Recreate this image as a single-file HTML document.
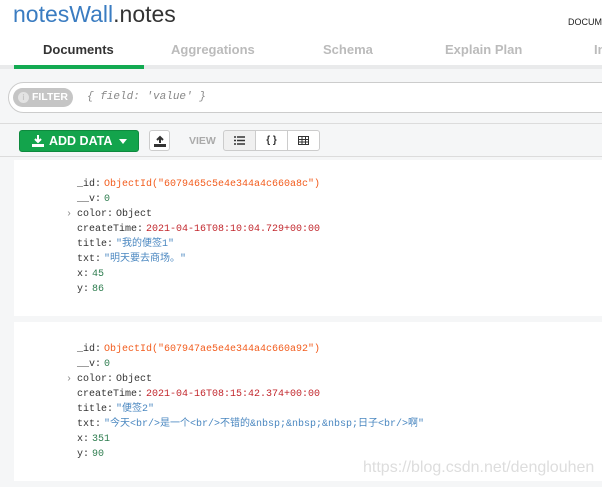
<!DOCTYPE html>
<html><head><meta charset="utf-8">
<style>
*{margin:0;padding:0;box-sizing:border-box}
body{width:602px;height:487px;overflow:hidden;background:#f5f6f7;font-family:"Liberation Sans",Arial,sans-serif;position:relative}
.hdr{position:absolute;left:0;top:0;width:602px;height:69px;background:#fff}
.title{position:absolute;left:13px;top:1px;font-size:23px;color:#333}
.title b{font-weight:normal;color:#3a7cc1}
.docum{position:absolute;left:568px;top:17px;font-size:9px;color:#222}
.tab{position:absolute;top:42px;font-size:13px;font-weight:bold;color:#bbb}
.bar{position:absolute;left:0;top:65px;width:602px;height:4px;background:#e9eaeb}
.green{position:absolute;left:14px;top:65px;width:130px;height:4px;background:#13aa52}
.filter{position:absolute;left:8px;top:82px;width:610px;height:31px;background:#fff;border:1px solid #ccc;border-radius:16px}
.pill{position:absolute;left:4px;top:5px;width:60px;height:19px;background:#c5c5c5;border-radius:10px;color:#fff;font-size:10.5px;font-weight:bold;line-height:19px;padding-left:19px;white-space:nowrap}
.pill i{position:absolute;left:5px;top:4px;width:11px;height:11px;border-radius:50%;background:#e3e3e3;color:#c5c5c5;font-style:normal;font-size:8px;line-height:11px;text-align:center}
.ph{position:absolute;left:78px;top:8px;font-family:"Liberation Mono",monospace;font-style:italic;font-size:11px;color:#888}
.hl{position:absolute;left:0;width:602px;height:1px;background:#dcdcdc}
.add{position:absolute;left:19px;top:130px;width:120px;height:22px;background:#13a44c;border:1px solid #0e8a3e;border-radius:3px;color:#fff;font-size:12.5px;font-weight:bold;line-height:20px;padding-left:29px}
.up{position:absolute;left:149px;top:130px;width:21px;height:21px;background:#fff;border:1px solid #ccc;border-radius:3px}
.view{position:absolute;left:189px;top:135px;font-size:10.5px;font-weight:bold;color:#aaa}
.vb{position:absolute;top:130px;width:33px;height:21px;background:#fff;border:1px solid #ccc;font-size:10px;text-align:center;line-height:19px;color:#333}
.card{position:absolute;left:14px;width:600px;background:#fff}
.doc{position:absolute;left:77px;font-family:"Liberation Mono","Noto Sans CJK SC",monospace;font-size:10px;line-height:15px;color:#333;white-space:pre}
.doc span{margin-left:3px}
.o{color:#f25c1d}.n{color:#2e7d4f}.r{color:#c2272d}.s{color:#4a87c0}
.doc .arr{position:absolute;left:-11px;margin:0;color:#888}
.wm{position:absolute;left:363px;top:459px;font-size:16px;color:#ddd}
</style></head><body>
<div class="hdr">
<div class="title"><b>notesWall</b>.notes</div>
<div class="docum">DOCUM</div>
<div class="tab" style="left:43px;color:#333">Documents</div>
<div class="tab" style="left:171px">Aggregations</div>
<div class="tab" style="left:323px">Schema</div>
<div class="tab" style="left:445px">Explain Plan</div>
<div class="tab" style="left:594px">In</div>
</div>
<div class="bar"></div><div class="green"></div>
<div class="filter"><div class="pill"><i>i</i>FILTER</div><div class="ph">{ field: 'value' }</div></div>
<div class="hl" style="top:123px"></div>
<div class="add"><svg style="position:absolute;left:12px;top:4px" width="12" height="12" viewBox="0 0 12 12"><path d="M6 0v7M3 4l3 3 3-3" stroke="#fff" stroke-width="2" fill="none"/><rect x="0" y="9" width="12" height="3" fill="#fff"/></svg>ADD DATA<svg style="position:absolute;left:99px;top:8px" width="8" height="5"><path d="M0 0h8L4 5z" fill="#fff"/></svg></div>
<div class="up"><svg style="position:absolute;left:4px;top:4px" width="12" height="12" viewBox="0 0 12 12"><path d="M6 8V2M3 5l3-3 3 3" stroke="#333" stroke-width="2" fill="none"/><rect x="0" y="9" width="12" height="3" fill="#333"/></svg></div>
<div class="view">VIEW</div>
<div class="vb" style="left:223px;background:#f0f0f0;border-radius:3px 0 0 3px"><svg width="11" height="9" style="margin-top:5px"><path d="M0 1h2M3 1h8M0 4.5h2M3 4.5h8M0 8h2M3 8h8" stroke="#333" stroke-width="1.6"/></svg></div>
<div class="vb" style="left:255px;font-weight:bold">{ }</div>
<div class="vb" style="left:287px;border-radius:0 3px 3px 0"><svg width="11" height="9" style="margin-top:5px"><rect x=".5" y=".5" width="10" height="8" fill="none" stroke="#333"/><path d="M0 3.5h11M0 6h11M4 0v9M7.5 0v9" stroke="#333"/></svg></div>
<div class="hl" style="top:156px"></div>
<div class="card" style="top:160px;height:156px"></div>
<div class="card" style="top:322px;height:159px"></div>
<div class="doc" style="top:177px">_id:<span class="o">ObjectId("6079465c5e4e344a4c660a8c")</span>
__v:<span class="n">0</span>
<span class="arr">›</span>color:<span>Object</span>
createTime:<span class="r">2021-04-16T08:10:04.729+00:00</span>
title:<span class="s">"我的便签1"</span>
txt:<span class="s">"明天要去商场。"</span>
x:<span class="n">45</span>
y:<span class="n">86</span></div>
<div class="doc" style="top:342px">_id:<span class="o">ObjectId("607947ae5e4e344a4c660a92")</span>
__v:<span class="n">0</span>
<span class="arr">›</span>color:<span>Object</span>
createTime:<span class="r">2021-04-16T08:15:42.374+00:00</span>
title:<span class="s">"便签2"</span>
txt:<span class="s">"今天&lt;br/&gt;是一个&lt;br/&gt;不错的&amp;nbsp;&amp;nbsp;&amp;nbsp;日子&lt;br/&gt;啊"</span>
x:<span class="n">351</span>
y:<span class="n">90</span></div>
<div class="wm">https://blog.csdn.net/denglouhen</div>
</body></html>
